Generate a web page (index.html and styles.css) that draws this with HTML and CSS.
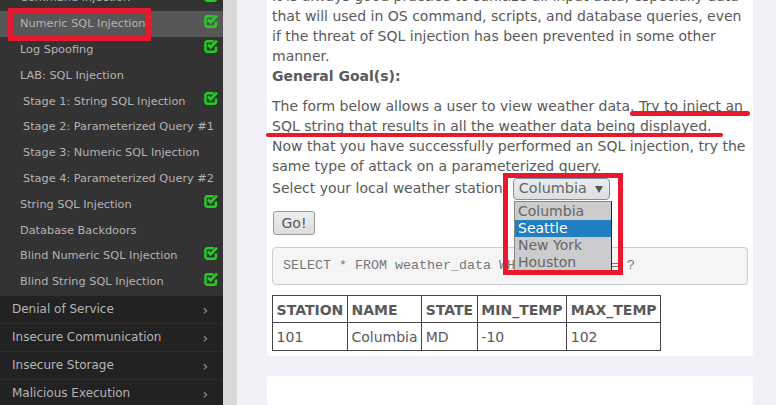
FILE: index.html
```html
<!DOCTYPE html>
<html lang="en">
<head>
    <meta charset="UTF-8">
    <title>SQL Injection</title>
    <link rel="stylesheet" href="styles.css">
</head>
<body>
    <svg class="defs" width="0" height="0">
        <symbol id="check" viewBox="0 0 16 16">
            <path d="M13 8.6v3.2a2 2 0 0 1-2 2H4.4a2 2 0 0 1-2-2V5.2a2 2 0 0 1 2-2h6.4" fill="none" stroke="currentColor" stroke-width="2.4"/>
            <path d="M5 6.6l2.6 2.6L14 2.6" fill="none" stroke="currentColor" stroke-width="2.8"/>
        </symbol>
    </svg>

    <div class="sidebar">
        <ul class="lessons">
            <li class="lesson">Command Injection<svg class="tick"><use href="#check"/></svg></li>
            <li class="lesson current">Numeric SQL Injection<svg class="tick"><use href="#check"/></svg></li>
            <li class="lesson">Log Spoofing<svg class="tick"><use href="#check"/></svg></li>
            <li class="lesson">LAB: SQL Injection</li>
            <li class="lesson stage">Stage 1: String SQL Injection<svg class="tick"><use href="#check"/></svg></li>
            <li class="lesson stage">Stage 2: Parameterized Query #1</li>
            <li class="lesson stage">Stage 3: Numeric SQL Injection</li>
            <li class="lesson stage">Stage 4: Parameterized Query #2</li>
            <li class="lesson">String SQL Injection<svg class="tick"><use href="#check"/></svg></li>
            <li class="lesson">Database Backdoors</li>
            <li class="lesson">Blind Numeric SQL Injection<svg class="tick"><use href="#check"/></svg></li>
            <li class="lesson">Blind String SQL Injection<svg class="tick"><use href="#check"/></svg></li>
        </ul>
        <ul class="groups">
            <li class="group">Denial of Service<span class="arrow">›</span></li>
            <li class="group">Insecure Communication<span class="arrow">›</span></li>
            <li class="group">Insecure Storage<span class="arrow">›</span></li>
            <li class="group">Malicious Execution<span class="arrow">›</span></li>
        </ul>
    </div>
    <div class="strip"></div>

    <div class="main">
        <div class="card">
            <p class="text">It is always good practice to sanitize all input data, especially data that will used in OS command, scripts, and database queries, even if the threat of SQL injection has been prevented in some other manner.</p>
            <h4 class="goal">General Goal(s):</h4>
            <p class="text">The form below allows a user to view weather data. Try to inject an SQL string that results in all the weather data being displayed.</p>
            <p class="text">Now that you have successfully performed an SQL injection, try the same type of attack on a parameterized query.</p>
            <div class="station">
                Select your local weather station:
                <span class="select">Columbia<span class="caret"></span></span>
            </div>
            <button class="go">Go!</button>
            <pre class="query">SELECT * FROM weather_data WHERE station = ?</pre>
            <table class="weather">
                <tr><th>STATION</th><th>NAME</th><th>STATE</th><th>MIN_TEMP</th><th>MAX_TEMP</th></tr>
                <tr><td>101</td><td>Columbia</td><td>MD</td><td>-10</td><td>102</td></tr>
            </table>
        </div>
        <div class="card next"></div>
    </div>

    <div class="options">
        <div class="option">Columbia</div>
        <div class="option picked">Seattle</div>
        <div class="option">New York</div>
        <div class="option">Houston</div>
    </div>

    <div class="mark box-lesson"></div>
    <div class="mark box-select"></div>
    <div class="mark line-one"></div>
    <div class="mark line-two"></div>
</body>
</html>
```

FILE: styles.css
```css
*{
    box-sizing: border-box;
}

html, body{
    margin: 0;
    height: 405px;
    overflow: hidden;
}

body{
    display: flex;
    background-color: #f1f1f7;
    font-family: "DejaVu Sans", sans-serif;
    color: #5a5a5a;
}

.defs{
    position: absolute;
}

ul{
    list-style: none;
    margin: 0;
    padding: 0;
}

.sidebar{
    width: 223px;
    flex-shrink: 0;
    overflow: hidden;
    background-color: #333;
    color: #b4b4b4;
    font-size: 11.3px;
}

.lessons{
    margin-top: -15px;
    padding-bottom: 1px;
}

.lesson{
    height: 25.8px;
    padding: 0 4px 0 20px;
    display: flex;
    align-items: center;
    justify-content: space-between;
    white-space: nowrap;
}

.lesson.current{
    background-color: #575757;
}

.stage{
    padding-left: 23px;
}

.tick{
    width: 16px;
    height: 16px;
    flex-shrink: 0;
    color: #1fd01f;
    margin-top: -6px;
}

.groups{
    background-color: #222;
}

.group{
    height: 28px;
    padding: 0 15px 0 12px;
    display: flex;
    align-items: center;
    justify-content: space-between;
    font-size: 12px;
    border-bottom: 1px solid #2c2c2c;
}

.arrow{
    font-size: 14px;
    line-height: 1;
    margin-top: 2px;
    color: #999;
}

.strip{
    width: 14px;
    flex-shrink: 0;
    background-color: #d9d9d9;
}

.main{
    width: 486px;
    margin-left: 30px;
    margin-top: -19px;
}

.card{
    background-color: white;
    padding: 5px;
    border-radius: 3px;
}

.card.next{
    margin-top: 20px;
    height: 29px;
}

.text{
    margin: 0;
    font-size: 14px;
    line-height: 20px;
}

.goal{
    margin: 0 0 10px 0;
    font-size: 14px;
    line-height: 20px;
}

.station{
    font-size: 14px;
    line-height: 20px;
    margin-top: 2px;
    white-space: nowrap;
}

.select{
    display: inline-flex;
    align-items: center;
    justify-content: space-between;
    width: 97px;
    height: 22px;
    margin-left: 1px;
    padding: 0 6px 2px 5px;
    vertical-align: middle;
    font-size: 14.4px;
    color: #666;
    background-image: linear-gradient(#eaeef0, #dcdfe0);
    border: 1px solid #6f93b5;
    border-radius: 4px;
}

.caret{
    border-left: 4px solid transparent;
    border-right: 4px solid transparent;
    border-top: 7px solid #555;
    margin-top: 2px;
}

.go{
    display: block;
    margin: 11px 0 0 1px;
    height: 24px;
    width: 42px;
    padding: 0;
    font-family: inherit;
    font-size: 14px;
    color: #5a5a5a;
    background-image: linear-gradient(#eee, #ddd);
    border: 1px solid #999;
    border-radius: 3px;
}

.query{
    margin: 12px 0 0 0;
    height: 38px;
    padding: 0 10px;
    line-height: 36px;
    font-family: "Liberation Mono", monospace;
    font-size: 13.33px;
    color: #777;
    background-color: #f5f5f5;
    border: 1px solid #ccc;
    border-radius: 4px;
}

.weather{
    margin-top: 10px;
    border-collapse: collapse;
    font-size: 14px;
}

.weather th, .weather td{
    border: 1px solid #444;
    padding: 1px 3.6px 0 3.6px;
    height: 27.4px;
    text-align: left;
    font-weight: normal;
}

.weather th{
    font-weight: bold;
}

/* open select list and the red marker strokes lie over the page */
.options{
    position: absolute;
    left: 514px;
    top: 201px;
    width: 98px;
    height: 70px;
    padding-top: 1px;
    background-color: #ccc;
    border: 1px solid #888;
    border-right-color: #222;
    border-bottom-color: #222;
    color: #666;
    font-size: 14px;
    line-height: 17px;
}

.option{
    padding-left: 3px;
}

.option.picked{
    background-color: #1f7fbf;
    color: white;
}

.mark{
    position: absolute;
}

.box-lesson{
    left: 8px;
    top: 8px;
    width: 143px;
    height: 33px;
    border: 5px solid #e8192c;
}

.box-select{
    left: 503px;
    top: 173px;
    width: 120px;
    height: 102px;
    border: 5px solid #e8192c;
}

.line-one{
    left: 630px;
    top: 111px;
    width: 120px;
    height: 5px;
    border-radius: 3px;
    background-color: #e8192c;
}

.line-two{
    left: 266px;
    top: 133px;
    width: 457px;
    height: 4px;
    border-radius: 3px;
    background-color: #e8192c;
}
```
